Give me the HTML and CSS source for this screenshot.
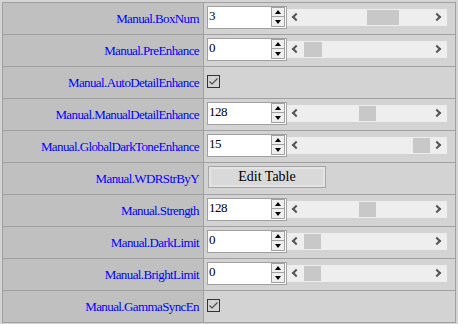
FILE: index.html
```html
<!DOCTYPE html>
<html>
<head>
<meta charset="utf-8">
<link rel="stylesheet" href="styles.css">
</head>
<body>
<div class="grid">
  <div class="row">
    <div class="label">Manual.BoxNum</div>
    <div class="value">
      <div class="num"><span class="txt">3</span><span class="spin"><span class="up"></span><span class="down"></span></span></div>
      <div class="track"><span class="arr l"></span><span class="trough"><span class="thumb" style="left:63px;width:32px"></span></span><span class="arr r"></span></div>
    </div>
  </div>
  <div class="row">
    <div class="label">Manual.PreEnhance</div>
    <div class="value">
      <div class="num"><span class="txt">0</span><span class="spin"><span class="up"></span><span class="down"></span></span></div>
      <div class="track"><span class="arr l"></span><span class="trough"><span class="thumb" style="left:0px;width:18px"></span></span><span class="arr r"></span></div>
    </div>
  </div>
  <div class="row">
    <div class="label">Manual.AutoDetailEnhance</div>
    <div class="value"><span class="check"><svg width="11" height="11" viewBox="0 0 11 11"><polyline points="1.5,5.5 4,8 9.5,2.5" fill="none" stroke="#4a4a4a" stroke-width="1.1"/></svg></span></div>
  </div>
  <div class="row">
    <div class="label">Manual.ManualDetailEnhance</div>
    <div class="value">
      <div class="num"><span class="txt">128</span><span class="spin"><span class="up"></span><span class="down"></span></span></div>
      <div class="track"><span class="arr l"></span><span class="trough"><span class="thumb" style="left:55px;width:17px"></span></span><span class="arr r"></span></div>
    </div>
  </div>
  <div class="row">
    <div class="label">Manual.GlobalDarkToneEnhance</div>
    <div class="value">
      <div class="num"><span class="txt">15</span><span class="spin"><span class="up"></span><span class="down"></span></span></div>
      <div class="track"><span class="arr l"></span><span class="trough"><span class="thumb" style="left:109px;width:17px"></span></span><span class="arr r"></span></div>
    </div>
  </div>
  <div class="row">
    <div class="label">Manual.WDRStrByY</div>
    <div class="value"><button class="btn">Edit Table</button></div>
  </div>
  <div class="row">
    <div class="label">Manual.Strength</div>
    <div class="value">
      <div class="num"><span class="txt">128</span><span class="spin"><span class="up"></span><span class="down"></span></span></div>
      <div class="track"><span class="arr l"></span><span class="trough"><span class="thumb" style="left:55px;width:17px"></span></span><span class="arr r"></span></div>
    </div>
  </div>
  <div class="row">
    <div class="label">Manual.DarkLimit</div>
    <div class="value">
      <div class="num"><span class="txt">0</span><span class="spin"><span class="up"></span><span class="down"></span></span></div>
      <div class="track"><span class="arr l"></span><span class="trough"><span class="thumb" style="left:0px;width:17px"></span></span><span class="arr r"></span></div>
    </div>
  </div>
  <div class="row">
    <div class="label">Manual.BrightLimit</div>
    <div class="value">
      <div class="num"><span class="txt">0</span><span class="spin"><span class="up"></span><span class="down"></span></span></div>
      <div class="track"><span class="arr l"></span><span class="trough"><span class="thumb" style="left:0px;width:17px"></span></span><span class="arr r"></span></div>
    </div>
  </div>
  <div class="row">
    <div class="label">Manual.GammaSyncEn</div>
    <div class="value"><span class="check"><svg width="11" height="11" viewBox="0 0 11 11"><polyline points="1.5,5.5 4,8 9.5,2.5" fill="none" stroke="#4a4a4a" stroke-width="1.1"/></svg></span></div>
  </div>
</div>
</body>
</html>
```

FILE: styles.css
```css
html, body {
  margin: 0;
  padding: 0;
  background: #d4d4d4;
}
body {
  padding: 2px;
  font-family: "Liberation Serif", "Times New Roman", serif;
}
.grid {
  width: 454px;
  box-sizing: border-box;
  border: 1px solid #a0a0a0;
  border-bottom: none;
}
.row {
  display: grid;
  grid-template-columns: 201px 251px;
  height: 32px;
  box-sizing: border-box;
  border-bottom: 1px solid #a0a0a0;
}
.label {
  background: #c0c0c0;
  border-right: 1px solid #a0a0a0;
  color: #0000ff;
  font-size: 13px;
  letter-spacing: -0.6px;
  text-align: right;
  padding-right: 4px;
  display: flex;
  align-items: center;
  justify-content: flex-end;
  padding-top: 1px;
}
.value {
  background: #d3d3d3;
  display: flex;
  align-items: center;
  padding-left: 3px;
  padding-bottom: 1px;
}
.num {
  position: relative;
  width: 80px;
  height: 23px;
  box-sizing: border-box;
  border: 1px solid #a0a0a0;
  background: #fff;
  margin-top: -2px;
}
.txt {
  position: absolute;
  left: 1px;
  top: 1px;
  font-size: 13px;
  letter-spacing: -0.5px;
  color: #000;
  line-height: 15px;
}
.spin {
  position: absolute;
  right: 1px;
  top: 0;
  width: 14px;
  height: 20px;
  display: flex;
  flex-direction: column;
}
.up, .down {
  flex: 1;
  background: #efefef;
  border: 1px solid #a0a0a0;
  position: relative;
}
.up { border-bottom: none; }
.up::after, .down::after {
  content: "";
  position: absolute;
  left: 3px;
  width: 0;
  height: 0;
  border-left: 3.5px solid transparent;
  border-right: 3.5px solid transparent;
}
.up::after {
  top: 2px;
  border-bottom: 4px solid #000;
}
.down::after {
  top: 3px;
  border-top: 4px solid #000;
}
.track {
  display: flex;
  width: 160px;
  height: 17px;
  background: #eeeeee;
  margin-top: -1px;
}
.arr {
  width: 17px;
  height: 17px;
  position: relative;
}
.arr::after {
  content: "";
  position: absolute;
  top: 5px;
  width: 4px;
  height: 4px;
  border-left: 2px solid #555;
  border-bottom: 2px solid #555;
}
.arr.l::after {
  left: 6px;
  transform: rotate(45deg);
}
.arr.r::after {
  left: 4px;
  transform: rotate(-135deg);
}
.trough {
  flex: 1;
  position: relative;
}
.thumb {
  position: absolute;
  top: 1px;
  bottom: 1px;
  background: #c8c8c8;
}
.check {
  width: 13px;
  height: 13px;
  box-sizing: border-box;
  border: 1px solid #333;
  display: flex;
  align-items: center;
  justify-content: center;
  margin-top: -1px;
}
.check svg { display: block; }
.btn {
  margin-left: 1px;
  margin-top: -2px;
  width: 118px;
  height: 22px;
  box-sizing: border-box;
  border: 1px solid #a6a6a6;
  box-shadow: inset 0 0 0 2px #e4e4e4;
  background: #d9d9d9;
  font-family: "Liberation Serif", "Times New Roman", serif;
  font-size: 14px;
  color: #000;
  padding: 0;
}
```
